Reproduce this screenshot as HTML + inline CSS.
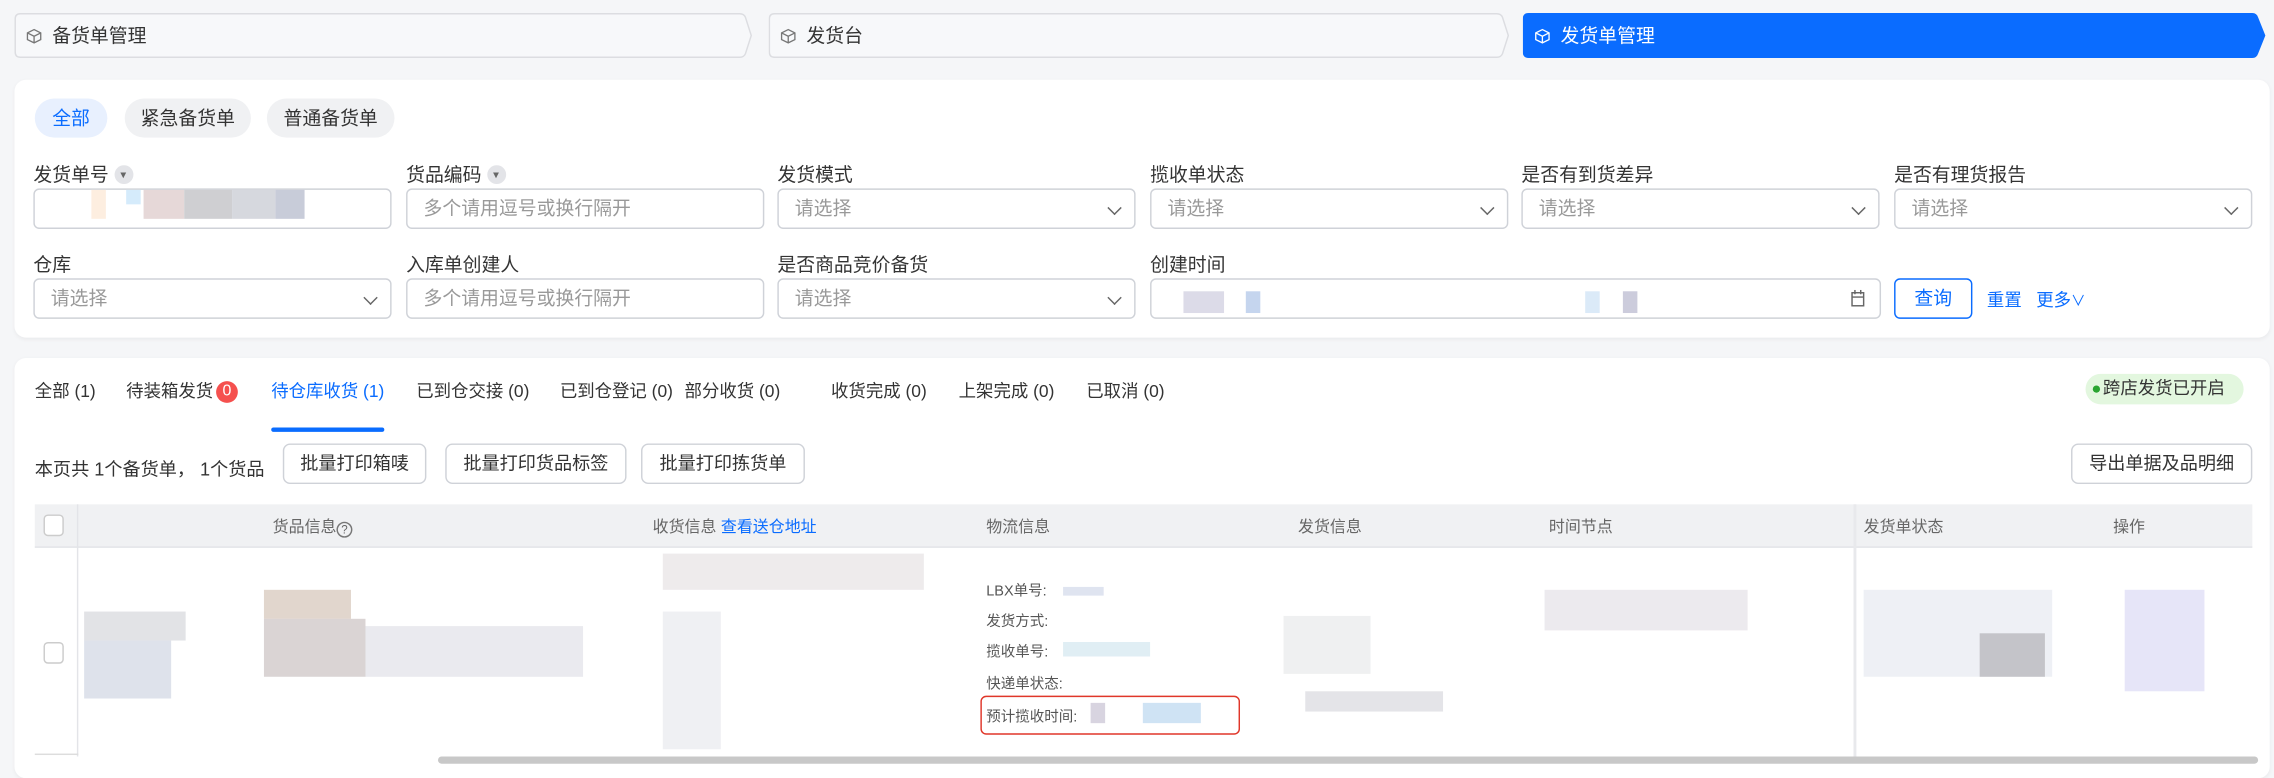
<!DOCTYPE html>
<html><head><meta charset="utf-8"><style>
*{box-sizing:border-box;margin:0;padding:0}
html,body{width:2274px;height:771px;overflow:hidden;background:#f5f6f8}
#w{position:absolute;left:0;top:0;width:1568px;height:532px;transform:scale(1.4503,1.4492);transform-origin:0 0;font-family:"Liberation Sans","Noto Sans CJK SC",sans-serif;font-size:13px;color:#333}
.a{position:absolute}
.bc{position:absolute;top:9px;height:31px;line-height:31px;padding-left:26px;font-size:13px;color:#333}
.bc svg.bg{position:absolute;left:0;top:0;z-index:-1}
.cube{position:absolute;left:8px;top:10px;width:11px;height:12px}
.card{position:absolute;background:#fff;border-radius:8px;box-shadow:0 1px 3px rgba(0,0,0,.05)}
.pill{position:absolute;top:68px;height:27px;border-radius:14px;background:#f0f1f3;line-height:27px;text-align:center;font-size:13px}
.lb{position:absolute;font-size:13px;color:#333}
.in{position:absolute;width:247px;height:28px;border:1px solid #cfd2d8;border-radius:4px;line-height:26px;padding-left:11px;color:#999;font-size:13px;background:#fff}
.chev{position:absolute;right:10px;top:9px;width:7px;height:7px;border-right:1.3px solid #666;border-bottom:1.3px solid #666;transform:rotate(45deg)}
.tri{display:inline-block;width:13px;height:13px;border-radius:50%;background:#e3e4e8;vertical-align:-2px;margin-left:4px;position:relative}
.tri:after{content:"";position:absolute;left:4px;top:5px;border-left:2.5px solid transparent;border-right:2.5px solid transparent;border-top:4px solid #666}
.tab{position:absolute;top:261px;font-size:12px;color:#333}
.btn{position:absolute;top:306px;height:28px;border:1px solid #cfd2d8;border-radius:5px;line-height:26px;text-align:center;font-size:12.5px;color:#333;background:#fff}
.th{position:absolute;top:355px;font-size:11px;color:#666}
.lg{position:absolute;left:680px;font-size:10px;color:#555}
</style></head><body><div id="w">
<div class="card" style="left:10px;top:55px;width:1555px;height:178px"></div>
<div class="bc" style="left:10px;width:510px"><svg class="bg" width="510" height="31"><path d="M4 .5H500Q503 .5 504 3L508 15.5L504 28Q503 30.5 500 30.5H4Q.5 30.5 .5 27V4Q.5 .5 4 .5Z" fill="#f7f8fa" stroke="#dcdde1"/></svg><svg class="cube" viewBox="0 0 12 12"><path d="M6 1L11 3.5V8.5L6 11L1 8.5V3.5Z M1 3.5L6 6L11 3.5 M6 6V11" fill="none" stroke="#777" stroke-width="1"/></svg>备货单管理</div>
<div class="bc" style="left:530px;width:512px"><svg class="bg" width="512" height="31"><path d="M4 .5H502Q505 .5 506 3L510 15.5L506 28Q505 30.5 502 30.5H4Q.5 30.5 .5 27V4Q.5 .5 4 .5Z" fill="#f7f8fa" stroke="#dcdde1"/></svg><svg class="cube" viewBox="0 0 12 12"><path d="M6 1L11 3.5V8.5L6 11L1 8.5V3.5Z M1 3.5L6 6L11 3.5 M6 6V11" fill="none" stroke="#777" stroke-width="1"/></svg>发货台</div>
<div class="bc" style="left:1050px;width:514px;color:#fff"><svg class="bg" width="514" height="31"><path d="M4 0H503Q506 0 507 3L512 15.5L507 28Q506 31 503 31H4Q0 31 0 27V4Q0 0 4 0Z" fill="#0a6cff"/></svg><svg class="cube" viewBox="0 0 12 12"><path d="M6 1L11 3.5V8.5L6 11L1 8.5V3.5Z M1 3.5L6 6L11 3.5 M6 6V11" fill="none" stroke="#fff" stroke-width="1"/></svg>发货单管理</div>

<div class="pill" style="left:24px;width:50px;background:#e8f0fe;color:#0a6cff">全部</div>
<div class="pill" style="left:86px;width:87px">紧急备货单</div>
<div class="pill" style="left:184px;width:88px">普通备货单</div>

<div class="lb" style="left:23px;top:110px">发货单号<span class="tri"></span></div>
<div class="lb" style="left:280px;top:110px">货品编码<span class="tri"></span></div>
<div class="lb" style="left:536px;top:110px">发货模式</div>
<div class="lb" style="left:793px;top:110px">揽收单状态</div>
<div class="lb" style="left:1049px;top:110px">是否有到货差异</div>
<div class="lb" style="left:1306px;top:110px">是否有理货报告</div>
<div class="in" style="left:23px;top:130px"></div>
<div class="a" style="left:63px;top:131px;width:10px;height:20px;background:#fdeee0"></div>
<div class="a" style="left:87px;top:131px;width:10px;height:10px;background:#d5ebfb"></div>
<div class="a" style="left:99px;top:131px;width:28px;height:20px;background:#e6d8d8"></div>
<div class="a" style="left:127px;top:131px;width:33px;height:20px;background:#cfcfd2"></div>
<div class="a" style="left:160px;top:131px;width:30px;height:20px;background:#d6d8de"></div>
<div class="a" style="left:190px;top:131px;width:20px;height:20px;background:#c8ccd9"></div>
<div class="in" style="left:280px;top:130px">多个请用逗号或换行隔开</div>
<div class="in" style="left:536px;top:130px">请选择<i class="chev"></i></div>
<div class="in" style="left:793px;top:130px">请选择<i class="chev"></i></div>
<div class="in" style="left:1049px;top:130px">请选择<i class="chev"></i></div>
<div class="in" style="left:1306px;top:130px">请选择<i class="chev"></i></div>

<div class="lb" style="left:23px;top:172px">仓库</div>
<div class="lb" style="left:280px;top:172px">入库单创建人</div>
<div class="lb" style="left:536px;top:172px">是否商品竞价备货</div>
<div class="lb" style="left:793px;top:172px">创建时间</div>
<div class="in" style="left:23px;top:192px">请选择<i class="chev"></i></div>
<div class="in" style="left:280px;top:192px">多个请用逗号或换行隔开</div>
<div class="in" style="left:536px;top:192px">请选择<i class="chev"></i></div>
<div class="in" style="left:793px;top:192px;width:504px"><svg class="a" style="right:10px;top:7px" width="10" height="12" viewBox="0 0 10 12"><rect x="1" y="2" width="8" height="9" fill="none" stroke="#666"/><path d="M1 5H9M3 0V3M7 0V3" stroke="#666"/></svg></div>
<div class="a" style="left:816px;top:201px;width:28px;height:15px;background:#dcdbe8"></div>
<div class="a" style="left:859px;top:201px;width:10px;height:15px;background:#c5d5ee"></div>
<div class="a" style="left:1093px;top:201px;width:10px;height:15px;background:#dbeaf8"></div>
<div class="a" style="left:1119px;top:201px;width:10px;height:15px;background:#ccccdc"></div>
<div class="a" style="left:1306px;top:192px;width:54px;height:28px;border:1px solid #0a6cff;border-radius:4px;color:#0a6cff;text-align:center;line-height:26px">查询</div>
<div class="a" style="left:1370px;top:198px;color:#0a6cff;font-size:12px">重置</div>
<div class="a" style="left:1404px;top:198px;color:#0a6cff;font-size:12px">更多<span style="font-size:10px">∨</span></div>

<div class="card" style="left:10px;top:247px;width:1555px;height:290px"></div>
<div class="tab" style="left:24px">全部 (1)</div>
<div class="tab" style="left:87px">待装箱发货<span style="display:inline-block;width:15px;height:15px;border-radius:50%;background:#f5504e;color:#fff;font-size:11px;line-height:15px;text-align:center;margin-left:2px;vertical-align:1px">0</span></div>
<div class="tab" style="left:187px;color:#0a6cff">待仓库收货 (1)</div>
<div class="a" style="left:187px;top:295px;width:78px;height:3px;border-radius:2px;background:#0a6cff"></div>
<div class="tab" style="left:287px">已到仓交接 (0)</div>
<div class="tab" style="left:386px">已到仓登记 (0)</div>
<div class="tab" style="left:472px">部分收货 (0)</div>
<div class="tab" style="left:573px">收货完成 (0)</div>
<div class="tab" style="left:661px">上架完成 (0)</div>
<div class="tab" style="left:749px">已取消 (0)</div>
<div class="a" style="left:1438px;top:258px;width:109px;height:21px;border-radius:11px;background:#e3f7df;font-size:12px;line-height:21px;padding-left:12px;color:#333"><i style="position:absolute;left:5px;top:8px;width:5px;height:5px;border-radius:50%;background:#2aa531"></i>跨店发货已开启</div>

<div class="a" style="left:24px;top:313px;font-size:12.5px">本页共 1个备货单， 1个货品</div>
<div class="btn" style="left:195px;width:99px">批量打印箱唛</div>
<div class="btn" style="left:307px;width:125px">批量打印货品标签</div>
<div class="btn" style="left:442px;width:113px">批量打印拣货单</div>
<div class="btn" style="left:1428px;width:125px">导出单据及品明细</div>

<div class="a" style="left:24px;top:348px;width:1529px;height:30px;background:#f0f1f3;border-bottom:1px solid #e3e4e8"></div>
<div class="a" style="left:30px;top:355px;width:14px;height:15px;border:1px solid #ccc;border-radius:3px;background:#fff"></div>
<div class="a" style="left:53px;top:348px;width:1px;height:174px;background:#e3e4e8"></div>
<div class="a" style="left:1278px;top:348px;width:2px;height:174px;background:#e8e9ec"></div>
<div class="th" style="left:188px">货品信息<span style="display:inline-block;width:11px;height:11px;border:1px solid #777;border-radius:50%;font-size:8px;line-height:9px;text-align:center;vertical-align:-1px">?</span></div>
<div class="th" style="left:450px">收货信息 <span style="color:#0a6cff">查看送仓地址</span></div>
<div class="th" style="left:680px">物流信息</div>
<div class="th" style="left:895px">发货信息</div>
<div class="th" style="left:1068px">时间节点</div>
<div class="th" style="left:1285px">发货单状态</div>
<div class="th" style="left:1457px">操作</div>
<div class="a" style="left:30px;top:443px;width:14px;height:15px;border:1px solid #ccc;border-radius:3px;background:#fff"></div>
<div class="a" style="left:24px;top:520px;width:30px;height:1px;background:#ddd"></div>

<div class="a" style="left:58px;top:422px;width:70px;height:20px;background:#d5d7dc;opacity:.7"></div>
<div class="a" style="left:58px;top:442px;width:60px;height:40px;background:#c8cfdd;opacity:.6"></div>
<div class="a" style="left:182px;top:407px;width:60px;height:20px;background:#d9ccc0;opacity:.8"></div>
<div class="a" style="left:182px;top:427px;width:70px;height:40px;background:#c2b8b8;opacity:.6"></div>
<div class="a" style="left:252px;top:432px;width:150px;height:35px;background:#dcdce4;opacity:.6"></div>
<div class="a" style="left:457px;top:382px;width:180px;height:25px;background:#e2dde0;opacity:.6"></div>
<div class="a" style="left:457px;top:422px;width:40px;height:95px;background:#e0e2e8;opacity:.5"></div>
<div class="a" style="left:885px;top:425px;width:60px;height:40px;background:#e4e6e8;opacity:.6"></div>
<div class="a" style="left:900px;top:477px;width:95px;height:14px;background:#d8d8de;opacity:.7"></div>
<div class="a" style="left:1065px;top:407px;width:140px;height:28px;background:#e0dce2;opacity:.6"></div>
<div class="a" style="left:1285px;top:407px;width:130px;height:60px;background:#e2e6ef;opacity:.6"></div>
<div class="a" style="left:1365px;top:437px;width:45px;height:30px;background:#a8a6ac;opacity:.6"></div>
<div class="a" style="left:1465px;top:407px;width:55px;height:70px;background:#d6d4f4;opacity:.6"></div>

<div class="lg" style="top:399px">LBX单号:</div>
<div class="lg" style="top:420px">发货方式:</div>
<div class="lg" style="top:441px">揽收单号:</div>
<div class="lg" style="top:463px">快递单状态:</div>
<div class="lg" style="top:486px">预计揽收时间:</div>
<div class="a" style="left:733px;top:405px;width:28px;height:6px;background:#dfe4f0"></div>
<div class="a" style="left:733px;top:443px;width:60px;height:10px;background:#e0eef4"></div>
<div class="a" style="left:752px;top:485px;width:10px;height:14px;background:#d8d4e0"></div>
<div class="a" style="left:788px;top:485px;width:40px;height:14px;background:#cfe3f4"></div>
<div class="a" style="left:676px;top:480px;width:179px;height:27px;border:1.5px solid #e0372a;border-radius:4px"></div>

<div class="a" style="left:302px;top:522px;width:1255px;height:5px;border-radius:3px;background:#c8c8c8"></div>
</div></body></html>
